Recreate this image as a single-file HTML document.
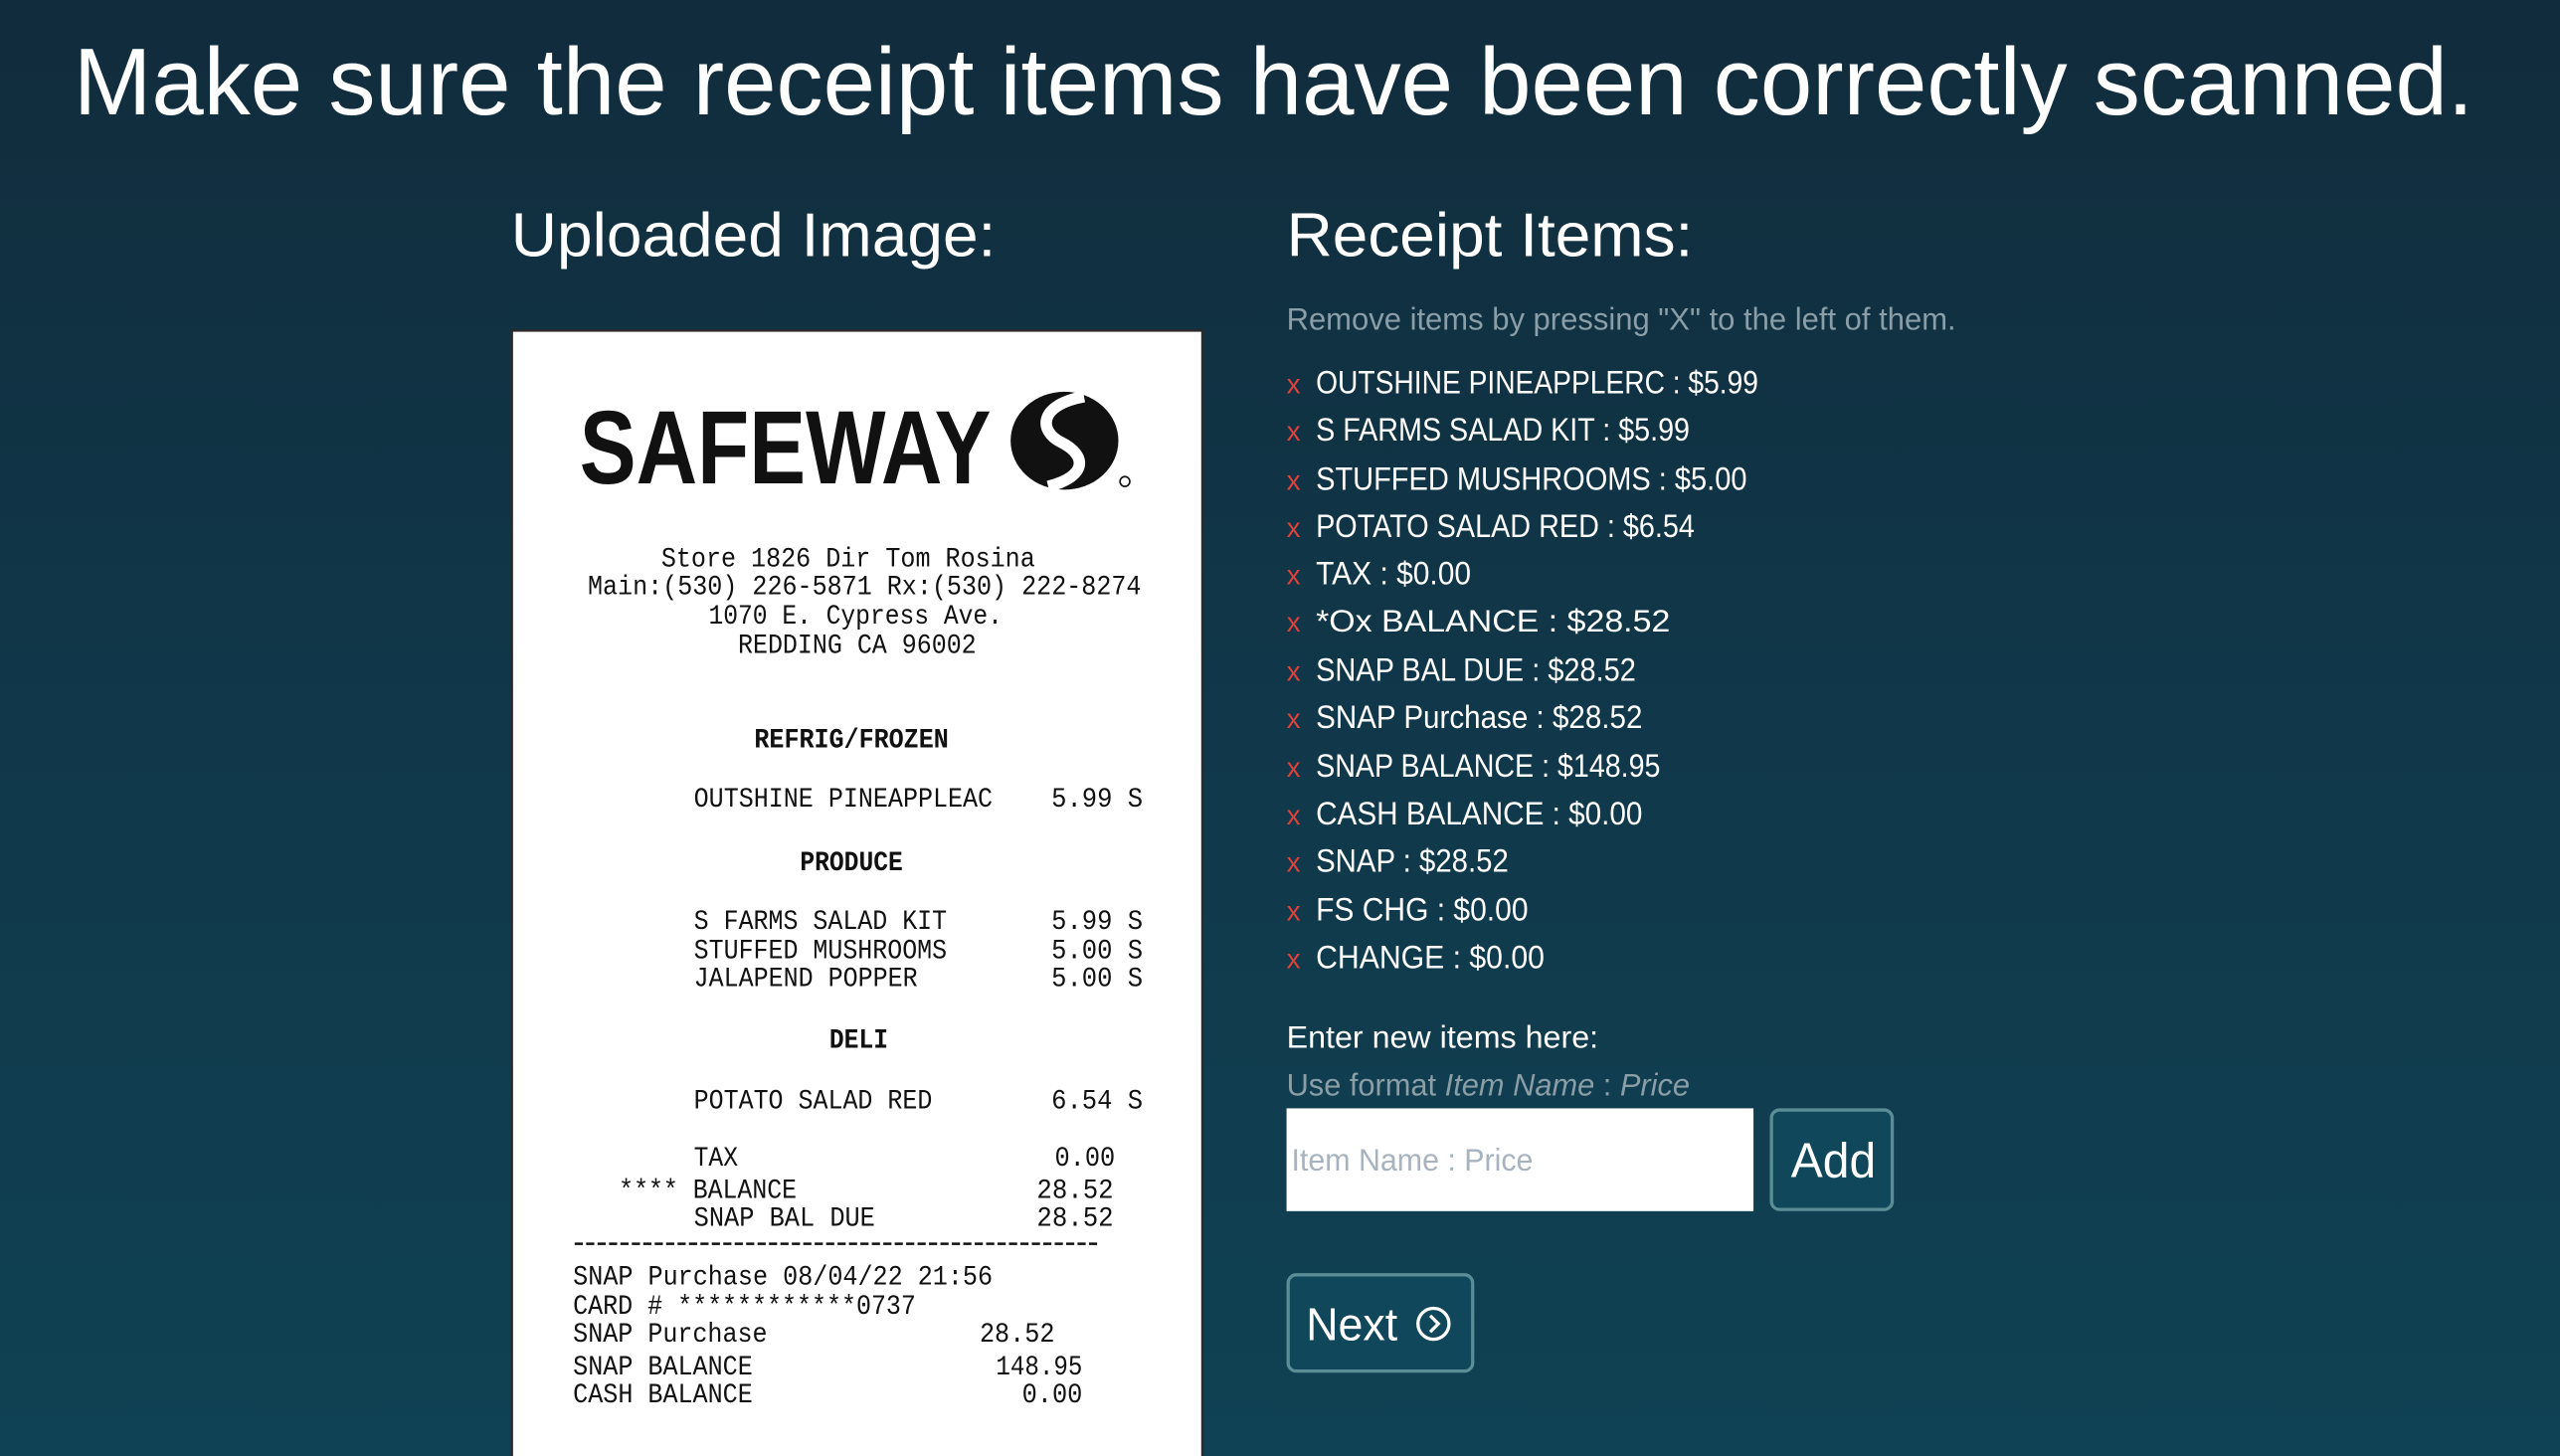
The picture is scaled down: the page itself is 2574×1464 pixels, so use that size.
<!DOCTYPE html>
<html><head><meta charset="utf-8"><style>
html,body{margin:0;padding:0;width:2574px;height:1464px;overflow:hidden;background:linear-gradient(180deg,#112c3c 0%,#10384a 50%,#0f4254 100%);}
svg{display:block}
text{font-family:"Liberation Sans",sans-serif;}
.m{font-family:"Liberation Mono",monospace;font-size:17px;fill:#111;}
.mb{font-family:"Liberation Mono",monospace;font-size:17px;fill:#111;font-weight:bold;}
.w{fill:#fff;}
.it{font-size:20px;fill:#fff;}
.x{font-size:17px;fill:#e0403a;}
</style></head><body>
<svg width="2574" height="1464" viewBox="0 0 1568 892" preserveAspectRatio="none">
<text class="w" x="45" y="70" font-size="58" textLength="1470" lengthAdjust="spacingAndGlyphs">Make sure the receipt items have been correctly scanned.</text>
<text class="w" x="313" y="157" font-size="38" textLength="297" lengthAdjust="spacingAndGlyphs">Uploaded Image:</text>
<text class="w" x="788" y="157" font-size="38" textLength="249" lengthAdjust="spacingAndGlyphs">Receipt Items:</text>

<!-- receipt -->
<rect x="313.5" y="202.5" width="423" height="700" fill="#fff" stroke="#2a2a2a" stroke-width="1.5"/>
<text x="355" y="296" font-size="64" font-weight="bold" fill="#111" textLength="252" lengthAdjust="spacingAndGlyphs">SAFEWAY</text>
<ellipse cx="652" cy="270" rx="33" ry="30" fill="#111"/>
<path d="M664 243 C636 248 636 264 650 271 C666 279 666 292 642 298" stroke="#fff" stroke-width="7" fill="none"/>
<circle cx="689" cy="295" r="3" fill="none" stroke="#111" stroke-width="1"/>
<text class="m" x="405" y="347" textLength="229" lengthAdjust="spacingAndGlyphs">Store 1826 Dir Tom Rosina</text>
<text class="m" x="360" y="364" textLength="339" lengthAdjust="spacingAndGlyphs">Main:(530) 226-5871 Rx:(530) 222-8274</text>
<text class="m" x="434" y="382" textLength="180" lengthAdjust="spacingAndGlyphs">1070 E. Cypress Ave.</text>
<text class="m" x="452" y="400" textLength="146" lengthAdjust="spacingAndGlyphs">REDDING CA 96002</text>
<text class="mb" x="462" y="458" textLength="119" lengthAdjust="spacingAndGlyphs">REFRIG/FROZEN</text>
<text class="m" x="425" y="494" textLength="183" lengthAdjust="spacingAndGlyphs">OUTSHINE PINEAPPLEAC</text>
<text class="m" x="644" y="494" textLength="56" lengthAdjust="spacingAndGlyphs">5.99 S</text>
<text class="mb" x="490" y="533" textLength="63" lengthAdjust="spacingAndGlyphs">PRODUCE</text>
<text class="m" x="425" y="569" textLength="155" lengthAdjust="spacingAndGlyphs">S FARMS SALAD KIT</text>
<text class="m" x="644" y="569" textLength="56" lengthAdjust="spacingAndGlyphs">5.99 S</text>
<text class="m" x="425" y="587" textLength="155" lengthAdjust="spacingAndGlyphs">STUFFED MUSHROOMS</text>
<text class="m" x="644" y="587" textLength="56" lengthAdjust="spacingAndGlyphs">5.00 S</text>
<text class="m" x="425" y="604" textLength="137" lengthAdjust="spacingAndGlyphs">JALAPEND POPPER</text>
<text class="m" x="644" y="604" textLength="56" lengthAdjust="spacingAndGlyphs">5.00 S</text>
<text class="mb" x="508" y="642" textLength="36" lengthAdjust="spacingAndGlyphs">DELI</text>
<text class="m" x="425" y="679" textLength="146" lengthAdjust="spacingAndGlyphs">POTATO SALAD RED</text>
<text class="m" x="644" y="679" textLength="56" lengthAdjust="spacingAndGlyphs">6.54 S</text>
<text class="m" x="425" y="714" textLength="27" lengthAdjust="spacingAndGlyphs">TAX</text>
<text class="m" x="646" y="714" textLength="37" lengthAdjust="spacingAndGlyphs">0.00</text>
<text class="m" x="379" y="734" textLength="109" lengthAdjust="spacingAndGlyphs">**** BALANCE</text>
<text class="m" x="635" y="734" textLength="47" lengthAdjust="spacingAndGlyphs">28.52</text>
<text class="m" x="425" y="751" textLength="111" lengthAdjust="spacingAndGlyphs">SNAP BAL DUE</text>
<text class="m" x="635" y="751" textLength="47" lengthAdjust="spacingAndGlyphs">28.52</text>
<line x1="352" y1="762" x2="672" y2="762" stroke="#111" stroke-width="1.5" stroke-dasharray="5 2"/>
<text class="m" x="351" y="787" textLength="257" lengthAdjust="spacingAndGlyphs">SNAP Purchase 08/04/22 21:56</text>
<text class="m" x="351" y="805" textLength="210" lengthAdjust="spacingAndGlyphs">CARD # ************0737</text>
<text class="m" x="351" y="822" textLength="119" lengthAdjust="spacingAndGlyphs">SNAP Purchase</text>
<text class="m" x="600" y="822" textLength="46" lengthAdjust="spacingAndGlyphs">28.52</text>
<text class="m" x="351" y="842" textLength="110" lengthAdjust="spacingAndGlyphs">SNAP BALANCE</text>
<text class="m" x="610" y="842" textLength="53" lengthAdjust="spacingAndGlyphs">148.95</text>
<text class="m" x="351" y="859" textLength="110" lengthAdjust="spacingAndGlyphs">CASH BALANCE</text>
<text class="m" x="626" y="859" textLength="37" lengthAdjust="spacingAndGlyphs">0.00</text>

<!-- right column -->
<text x="788" y="202" font-size="19" fill="#8a9ea8" textLength="410" lengthAdjust="spacingAndGlyphs">Remove items by pressing "X" to the left of them.</text>
<g>
<text class="x" x="788" y="241">x</text><text class="it" x="806" y="241" textLength="271" lengthAdjust="spacingAndGlyphs">OUTSHINE PINEAPPLERC : $5.99</text>
<text class="x" x="788" y="270">x</text><text class="it" x="806" y="270" textLength="229" lengthAdjust="spacingAndGlyphs">S FARMS SALAD KIT : $5.99</text>
<text class="x" x="788" y="300">x</text><text class="it" x="806" y="300" textLength="264" lengthAdjust="spacingAndGlyphs">STUFFED MUSHROOMS : $5.00</text>
<text class="x" x="788" y="329">x</text><text class="it" x="806" y="329" textLength="232" lengthAdjust="spacingAndGlyphs">POTATO SALAD RED : $6.54</text>
<text class="x" x="788" y="358">x</text><text class="it" x="806" y="358" textLength="95" lengthAdjust="spacingAndGlyphs">TAX : $0.00</text>
<text class="x" x="788" y="387">x</text><text x="806" y="387" font-size="19" fill="#fff" textLength="217" lengthAdjust="spacingAndGlyphs">*Ox BALANCE : $28.52</text>
<text class="x" x="788" y="417">x</text><text class="it" x="806" y="417" textLength="196" lengthAdjust="spacingAndGlyphs">SNAP BAL DUE : $28.52</text>
<text class="x" x="788" y="446">x</text><text class="it" x="806" y="446" textLength="200" lengthAdjust="spacingAndGlyphs">SNAP Purchase : $28.52</text>
<text class="x" x="788" y="476">x</text><text class="it" x="806" y="476" textLength="211" lengthAdjust="spacingAndGlyphs">SNAP BALANCE : $148.95</text>
<text class="x" x="788" y="505">x</text><text class="it" x="806" y="505" textLength="200" lengthAdjust="spacingAndGlyphs">CASH BALANCE : $0.00</text>
<text class="x" x="788" y="534">x</text><text class="it" x="806" y="534" textLength="118" lengthAdjust="spacingAndGlyphs">SNAP : $28.52</text>
<text class="x" x="788" y="564">x</text><text class="it" x="806" y="564" textLength="130" lengthAdjust="spacingAndGlyphs">FS CHG : $0.00</text>
<text class="x" x="788" y="593">x</text><text class="it" x="806" y="593" textLength="140" lengthAdjust="spacingAndGlyphs">CHANGE : $0.00</text>
</g>
<text class="w" x="788" y="642" font-size="19" textLength="191" lengthAdjust="spacingAndGlyphs">Enter new items here:</text>
<text x="788" y="671" font-size="19" fill="#8a9ea8" textLength="247" lengthAdjust="spacingAndGlyphs">Use format <tspan font-style="italic">Item Name</tspan> : <tspan font-style="italic">Price</tspan></text>
<rect x="788" y="679" width="286" height="63" fill="#fff"/>
<text x="791" y="717" font-size="19" fill="#a8b3c0" textLength="148" lengthAdjust="spacingAndGlyphs">Item Name : Price</text>
<rect x="1085" y="680" width="74" height="61" rx="5" fill="#11475a" stroke="#5a8d96" stroke-width="2"/>
<text class="w" x="1097" y="721" font-size="30" textLength="52" lengthAdjust="spacingAndGlyphs">Add</text>
<rect x="789" y="781" width="113" height="59" rx="5" fill="#11475a" stroke="#5a8d96" stroke-width="2"/>
<text class="w" x="800" y="821" font-size="28" textLength="56" lengthAdjust="spacingAndGlyphs">Next</text>
<circle cx="878" cy="811" r="9.5" fill="none" stroke="#fff" stroke-width="2"/>
<path d="M876 806 L881 811 L876 816" fill="none" stroke="#fff" stroke-width="2"/>
</svg>
</body></html>
